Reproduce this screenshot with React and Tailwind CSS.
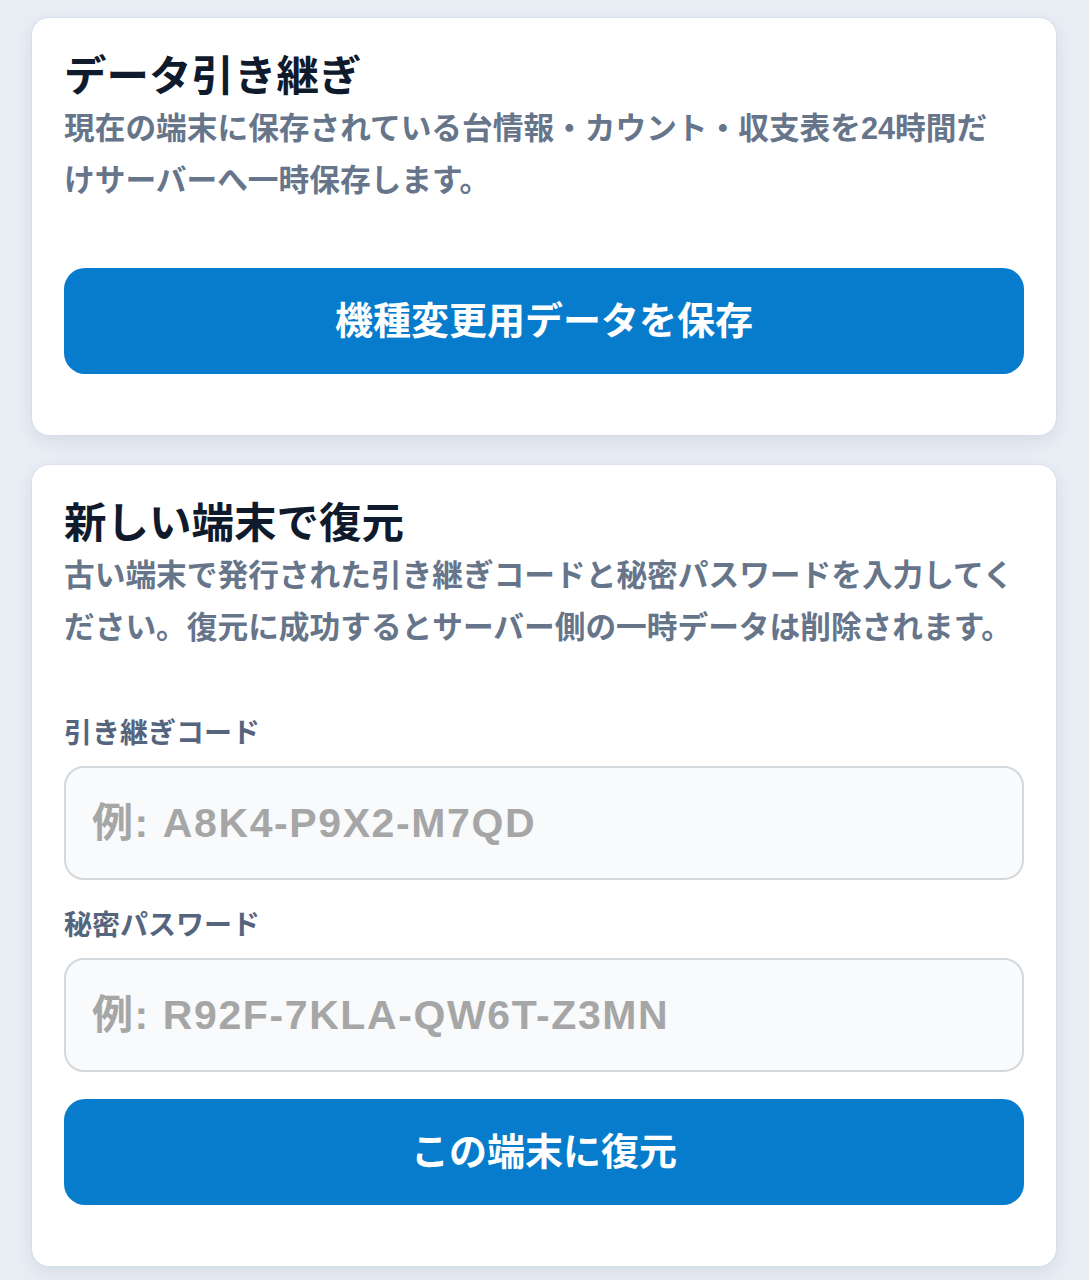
import { useState } from "react";

const font = {
  fontFamily: '"Liberation Sans", "Noto Sans CJK JP", sans-serif',
};

function Card({ children }) {
  return (
    <section className="rounded-[17px] bg-white px-8 pt-[33px] pb-[61px] shadow-[0_0_0_1px_rgba(210,220,232,0.7),0_6px_18px_rgba(30,50,90,0.10)]">
      {children}
    </section>
  );
}

function Field({ label, placeholder, value, onChange, className = "" }) {
  return (
    <div className={className}>
      <label className="block text-[28px] leading-[36px] font-bold text-[#55657e]">{label}</label>
      <input
        value={value}
        onChange={(e) => onChange(e.target.value)}
        placeholder={placeholder}
        className="mt-[14px] block h-[114px] w-full rounded-[20px] border-2 border-[#d3d8dc] bg-[#f8fafb] pl-[26px] text-[41px] font-bold tracking-[1.6px] text-[#1f2937] outline-none placeholder:text-[#a6a6a6]"
      />
    </div>
  );
}

export default function App() {
  const [code, setCode] = useState("");
  const [password, setPassword] = useState("");

  return (
    <div style={font} className="min-h-[1280px] bg-[#e9eef5] pt-[18px] pl-8 pr-[33px] pb-4">
      <Card>
        <h2 className="text-[42.5px] leading-[52px] font-bold text-[#0f1a2c]">データ引き継ぎ</h2>
        <p className="text-[30.7px] leading-[52px] font-bold text-[#66758a]">
          現在の端末に保存されている台情報・カウント・収支表を24時間だ
          <br />
          けサーバーへ一時保存します。
        </p>
        <button className="mt-[61px] flex h-[106px] w-full items-center justify-center rounded-[21px] bg-[#077ccc] text-[38px] font-bold text-white">
          機種変更用データを保存
        </button>
      </Card>

      <div className="mt-[30px]">
        <Card>
          <h2 className="text-[42.5px] leading-[52px] font-bold text-[#0f1a2c]">新しい端末で復元</h2>
          <p className="text-[30.7px] leading-[52px] font-bold text-[#66758a]">
            古い端末で発行された引き継ぎコードと秘密パスワードを入力してく
            <br />
            ださい。復元に成功するとサーバー側の一時データは削除されます。
          </p>

          <Field
            className="mt-[62px]"
            label="引き継ぎコード"
            placeholder="例: A8K4-P9X2-M7QD"
            value={code}
            onChange={setCode}
          />
          <Field
            className="mt-[28px]"
            label="秘密パスワード"
            placeholder="例: R92F-7KLA-QW6T-Z3MN"
            value={password}
            onChange={setPassword}
          />

          <button className="mt-[27px] flex h-[106px] w-full items-center justify-center rounded-[21px] bg-[#077ccc] text-[38px] font-bold text-white">
            この端末に復元
          </button>
        </Card>
      </div>
    </div>
  );
}
